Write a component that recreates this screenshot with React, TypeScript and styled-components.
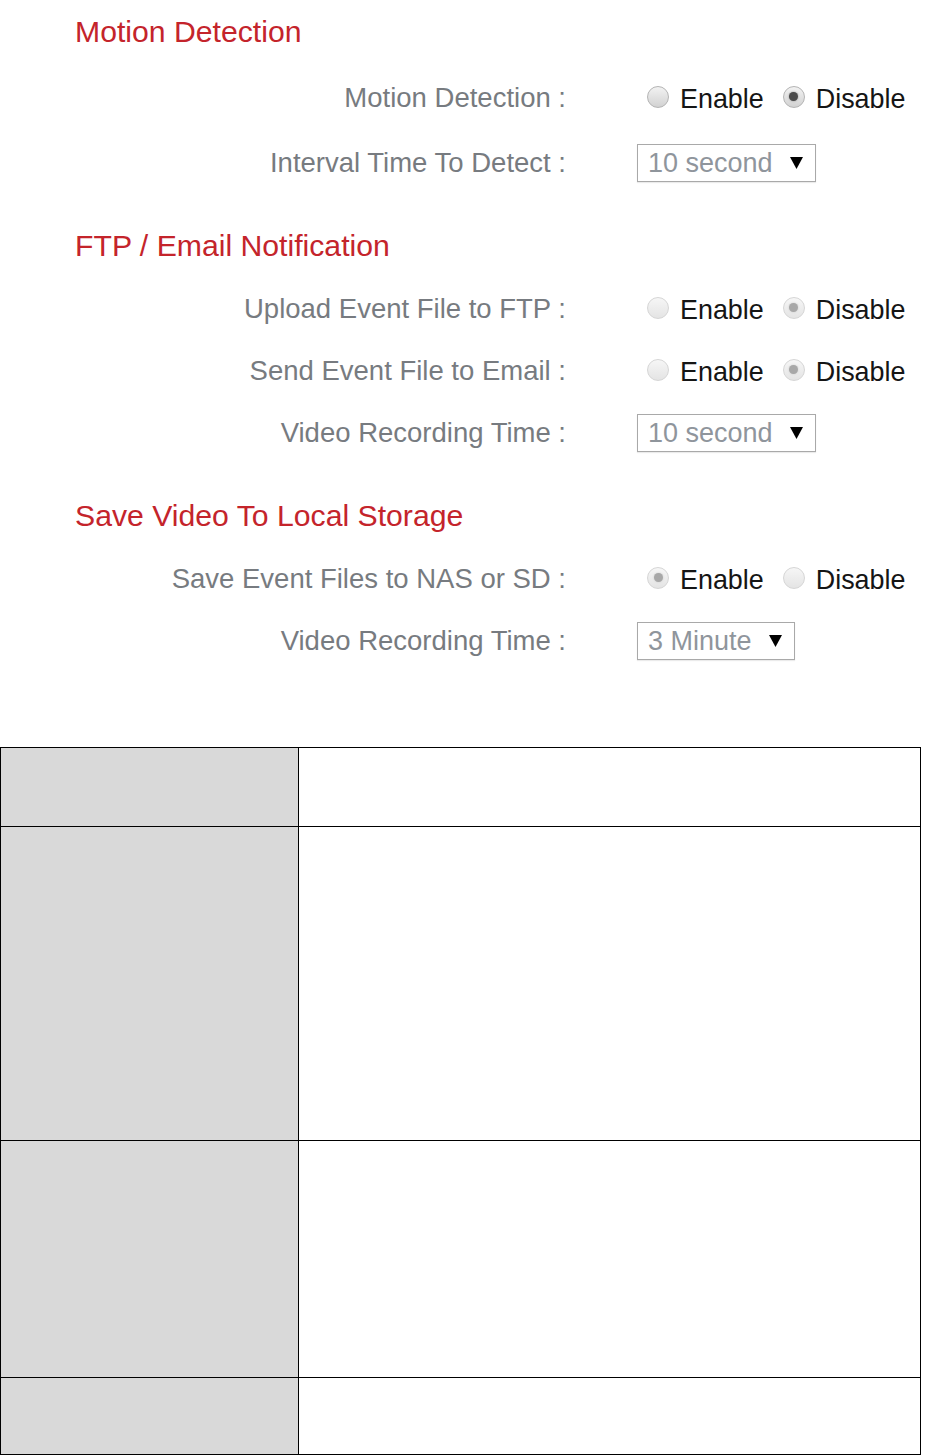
import * as React from "react";
import styled, { createGlobalStyle } from "styled-components";

const GlobalStyle = createGlobalStyle`
  html, body {
    margin: 0;
    padding: 0;
    background: #fff;
  }
  body {
    font-family: "Liberation Sans", Arial, sans-serif;
  }
`;

type Field =
  | { kind: "radio"; label: string; checked: "enable" | "disable"; muted?: boolean }
  | { kind: "select"; label: string; value: string; width: number };

type Section = {
  title: string;
  rowGap: number;
  fields: Field[];
};

const sections: Section[] = [
  {
    title: "Motion Detection",
    rowGap: 3,
    fields: [
      { kind: "radio", label: "Motion Detection :", checked: "disable" },
      { kind: "select", label: "Interval Time To Detect :", value: "10 second", width: 179 },
    ],
  },
  {
    title: "FTP / Email Notification",
    rowGap: 0,
    fields: [
      { kind: "radio", label: "Upload Event File to FTP :", checked: "disable", muted: true },
      { kind: "radio", label: "Send Event File to Email :", checked: "disable", muted: true },
      { kind: "select", label: "Video Recording Time :", value: "10 second", width: 179 },
    ],
  },
  {
    title: "Save Video To Local Storage",
    rowGap: 0,
    fields: [
      { kind: "radio", label: "Save Event Files to NAS or SD :", checked: "enable", muted: true },
      { kind: "select", label: "Video Recording Time :", value: "3 Minute", width: 158 },
    ],
  },
];

const tableRows = [79, 314, 237, 77];

const Page = styled.div`
  width: 950px;
  display: flex;
  flex-direction: column;
`;

const Form = styled.div`
  display: flex;
  flex-direction: column;
  gap: 20px;
`;

const SectionBox = styled.section<{ $rowGap: number }>`
  display: flex;
  flex-direction: column;
  gap: ${(p) => p.$rowGap}px;
`;

const Heading = styled.h2`
  margin: 0;
  height: 64px;
  padding-left: 75px;
  display: flex;
  align-items: center;
  font-size: 30.2px;
  font-weight: normal;
  color: #c4242b;
`;

const Row = styled.div`
  height: 62px;
  display: grid;
  grid-template-columns: 566px 1fr;
  column-gap: 71px;
  align-items: center;
`;

const Label = styled.div`
  text-align: right;
  font-size: 27.5px;
  color: #777b80;
  white-space: nowrap;
`;

const RadioGroup = styled.div`
  display: flex;
  align-items: center;
  padding-left: 10px;
  padding-top: 3px;
`;

const RadioOption = styled.label`
  display: flex;
  align-items: center;
  gap: 11px;
  margin-right: 19px;
  font-size: 26.9px;
  color: #151515;
`;

const Circle = styled.span<{ $checked: boolean; $muted: boolean }>`
  width: 22px;
  height: 22px;
  box-sizing: border-box;
  border-radius: 50%;
  border: 1px solid ${(p) => (p.$muted ? "#d6d6d6" : "#b4b4b4")};
  background: ${(p) =>
    p.$muted
      ? "linear-gradient(#f6f6f6, #e4e4e4)"
      : "linear-gradient(#f2f2f2, #d2d2d2)"};
  display: flex;
  align-items: center;
  justify-content: center;
  margin-top: -6px;

  &::after {
    content: "";
    display: ${(p) => (p.$checked ? "block" : "none")};
    width: 9px;
    height: 9px;
    border-radius: 50%;
    background: ${(p) => (p.$muted ? "#a8a8a8" : "#4a4a4a")};
    box-shadow: 0 0 2px ${(p) => (p.$muted ? "#c8c8c8" : "#888")};
  }
`;

const SelectBox = styled.div<{ $width: number }>`
  width: ${(p) => p.$width}px;
  height: 38px;
  box-sizing: border-box;
  border: 1px solid #a9a9a9;
  display: flex;
  align-items: center;
  justify-content: space-between;
  padding: 0 12px 0 10px;
  font-size: 27px;
  color: #8f959c;
  box-shadow: 0 1px 1px rgba(0, 0, 0, 0.08);
`;

const Arrow = styled.svg`
  width: 13px;
  height: 12px;
  flex: none;
`;

const Table = styled.table`
  margin-top: 75px;
  width: 921px;
  border-collapse: collapse;
  table-layout: fixed;
`;

const KeyCell = styled.td`
  width: 297px;
  border: 1px solid #000;
  background: #d9d9d9;
  padding: 0;
`;

const ValueCell = styled.td`
  border: 1px solid #000;
  background: #fff;
  padding: 0;
`;

function Radio({ text, checked, muted }: { text: string; checked: boolean; muted: boolean }) {
  return (
    <RadioOption>
      <Circle $checked={checked} $muted={muted} />
      {text}
    </RadioOption>
  );
}

function FieldRow({ field }: { field: Field }) {
  return (
    <Row>
      <Label>{field.label}</Label>
      {field.kind === "radio" ? (
        <RadioGroup>
          <Radio text="Enable" checked={field.checked === "enable"} muted={!!field.muted} />
          <Radio text="Disable" checked={field.checked === "disable"} muted={!!field.muted} />
        </RadioGroup>
      ) : (
        <div>
          <SelectBox $width={field.width}>
            {field.value}
            <Arrow viewBox="0 0 13 12">
              <polygon points="0,0 13,0 6.5,12" fill="#000" />
            </Arrow>
          </SelectBox>
        </div>
      )}
    </Row>
  );
}

export default function App() {
  return (
    <Page>
      <GlobalStyle />
      <Form>
        {sections.map((s) => (
          <SectionBox key={s.title} $rowGap={s.rowGap}>
            <Heading>{s.title}</Heading>
            {s.fields.map((f, i) => (
              <FieldRow key={i} field={f} />
            ))}
          </SectionBox>
        ))}
      </Form>
      <Table>
        <tbody>
          {tableRows.map((h, i) => (
            <tr key={i} style={{ height: h }}>
              <KeyCell />
              <ValueCell />
            </tr>
          ))}
        </tbody>
      </Table>
    </Page>
  );
}
